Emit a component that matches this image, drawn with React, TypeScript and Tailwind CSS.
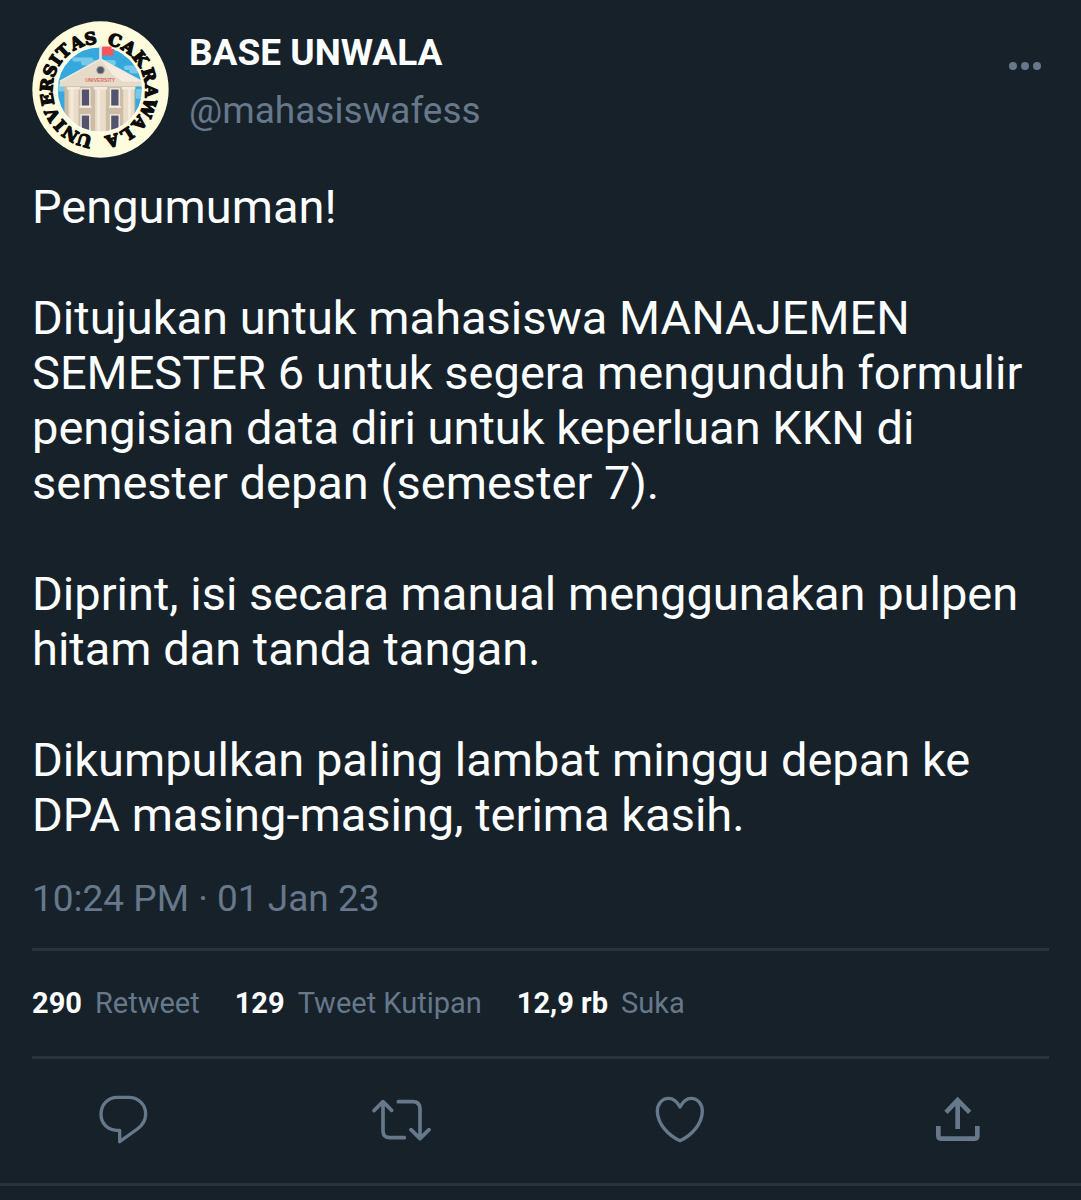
const ringLetters: [string, number][] = [
  ['U', 196],
  ['N', 213],
  ['I', 228],
  ['V', 242],
  ['E', 260],
  ['R', 276],
  ['S', 292],
  ['I', 305],
  ['T', 318],
  ['A', 335],
  ['S', 351],
  ['C', 18],
  ['A', 35],
  ['K', 53],
  ['R', 73],
  ['A', 91],
  ['W', 110],
  ['A', 129],
  ['L', 147],
  ['A', 165],
];

const paragraphs = [
  'Ditujukan untuk mahasiswa MANAJEMEN SEMESTER 6 untuk segera mengunduh formulir pengisian data diri untuk keperluan KKN di semester depan (semester 7).',
  'Diprint, isi secara manual menggunakan pulpen hitam dan tanda tangan.',
  'Dikumpulkan paling lambat minggu depan ke DPA masing-masing, terima kasih.',
];

const stats = [
  { value: '290', label: 'Retweet' },
  { value: '129', label: 'Tweet Kutipan' },
  { value: '12,9 rb', label: 'Suka' },
];

const Avatar = () => (
  <svg
    viewBox="35 33 410 410"
    className="size-[137px] shrink-0"
    role="img"
    aria-label="Universitas Cakrawala"
  >
    <defs>
      <clipPath id="badge">
        <circle cx="238" cy="238" r="128" />
      </clipPath>
    </defs>
    <circle cx="240" cy="238" r="204" fill="#fefcdc" />
    <g clipPath="url(#badge)">
      <rect x="105" y="105" width="270" height="270" fill="#35a9dd" />
      <g fill="#79c8e8">
        <rect x="156" y="142" width="62" height="12" rx="6" />
        <rect x="182" y="150" width="104" height="16" rx="8" />
        <rect x="310" y="166" width="60" height="14" rx="7" />
        <rect x="326" y="176" width="50" height="14" rx="7" />
        <rect x="108" y="220" width="30" height="24" rx="10" />
        <rect x="345" y="236" width="30" height="30" rx="8" />
      </g>
      <rect x="132" y="225" width="212" height="145" fill="#cdbda6" />
      <g fill="#e9ddc9">
        <rect x="144" y="236" width="30" height="134" />
        <rect x="224" y="236" width="32" height="134" />
        <rect x="308" y="236" width="32" height="134" />
      </g>
      <g fill="#f4eadb">
        <rect x="150" y="236" width="9" height="134" />
        <rect x="230" y="236" width="9" height="134" />
        <rect x="322" y="236" width="9" height="134" />
        <rect x="140" y="229" width="38" height="9" />
        <rect x="220" y="229" width="40" height="9" />
        <rect x="304" y="229" width="40" height="9" />
      </g>
      <g fill="#53536d" stroke="#f6efe4" strokeWidth="4">
        <rect x="182" y="236" width="26" height="52" />
        <rect x="270" y="236" width="26" height="52" />
        <rect x="182" y="314" width="26" height="47" />
        <rect x="270" y="314" width="26" height="47" />
      </g>
      <path d="M177 290h36M265 290h36" stroke="#f6efe4" strokeWidth="5" />
      <path d="M240 146 364 214v15H118v-15Z" fill="#e6dac8" />
      <path d="M240 146 364 214h-58l-30-20Z" fill="#f5ecdf" />
      <path d="M118 214 240 147l124 67" fill="none" stroke="#f1e8da" strokeWidth="5" />
      <path d="M132 229h212" stroke="#d5c6b1" strokeWidth="3" />
      <circle cx="240" cy="180" r="11" fill="#53536d" stroke="#9a948f" strokeWidth="3" />
      <text
        x="239"
        y="216"
        textAnchor="middle"
        fontSize="15"
        fontWeight="700"
        fill="#dc6a63"
        className="font-['Liberation_Sans']"
      >
        UNIVERSITY
      </text>
    </g>
    <circle cx="238" cy="238" r="128" fill="none" stroke="#fffff2" strokeWidth="4" />
    <rect x="236" y="106" width="8" height="44" fill="#e8e3e0" />
    <path d="M245 109h28v8h9l-6 10 6 9h-37Z" fill="#f9545c" />
    {ringLetters.map(([letter, angle]) => (
      <text
        key={angle}
        x="235"
        y="101"
        textAnchor="middle"
        fontSize="50"
        fontWeight="700"
        fill="#0c0b0a"
        stroke="#0c0b0a"
        strokeWidth="4"
        strokeLinejoin="round"
        transform={`rotate(${angle} 235 240)`}
        className="font-['DejaVu_Serif']"
      >
        {letter}
      </text>
    ))}
  </svg>
);

const iconClass = 'h-[54px] w-[60px] fill-none stroke-[#66788a]';

const ReplyIcon = () => (
  <svg viewBox="39 39 180 162" className={iconClass} strokeWidth="10" strokeLinejoin="round">
    <path d="M112 52h34c29 0 51 22 51 50 0 19-10 34-25 45l-53 38v-34h-9c-27 0-47-21-47-48 0-29 21-51 49-51Z" />
  </svg>
);

const RetweetIcon = () => (
  <svg
    viewBox="33 39 180 162"
    className={iconClass}
    strokeWidth="11"
    strokeLinecap="round"
    strokeLinejoin="round"
  >
    <path d="M42 92 69 65 95 91M69 67v85q0 21 21 21h43" />
    <path d="M115 65h43q22 0 22 22v88M153 149l27 27 27-27" />
  </svg>
);

const LikeIcon = () => (
  <svg viewBox="42 39 180 162" className={iconClass} strokeWidth="10" strokeLinejoin="round">
    <path d="M132 81C123 64 110 55 98 55c-20 0-34 17-34 38 0 40 36 75 68 89 32-14 67-49 67-89 0-21-14-38-34-38-12 0-24 9-33 26Z" />
  </svg>
);

const ShareIcon = () => (
  <svg viewBox="36 39 180 162" className={iconClass} strokeWidth="14">
    <path d="M90 97 125 60 161 97M125 62v85" />
    <path d="M67 138v29q0 9 9 9h99q9 0 9-9v-29" />
  </svg>
);

const actions = [
  { label: 'Balas', Icon: ReplyIcon },
  { label: 'Retweet', Icon: RetweetIcon },
  { label: 'Suka', Icon: LikeIcon },
  { label: 'Bagikan', Icon: ShareIcon },
];

export default function App() {
  return (
    <main className="min-h-screen bg-[#17212a] font-['Roboto',sans-serif] text-[#fcfeff]">
      <article className="border-b-3 border-[#28333d] pt-[21px]">
        <div className="px-8">
          <header className="flex items-start">
            <Avatar />
            <div className="ml-5 flex-1 pt-[10px]">
              <h1 className="text-[37px] leading-[44px] font-bold">BASE UNWALA</h1>
              <a href="#profile" className="mt-[14px] block text-[37px] leading-[44px] text-[#66788a]">
                @mahasiswafess
              </a>
            </div>
            <button type="button" aria-label="Lainnya" className="mt-9 mr-2">
              <svg viewBox="0 0 32 18" className="h-[18px] w-8 fill-[#66788a]">
                <circle cx="4" cy="9" r="4" />
                <circle cx="16" cy="9" r="4" />
                <circle cx="28" cy="9" r="4" />
              </svg>
            </button>
          </header>

          <div className="mt-[21px] space-y-14 text-[47px] leading-[55px]">
            <p>Pengumuman!</p>
            {paragraphs.map((text) => (
              <p key={text}>{text}</p>
            ))}
          </div>

          <p className="mt-[35px] text-[37px] leading-[44px] text-[#66788a]">
            <time dateTime="2023-01-01T22:24">10:24 PM · 01 Jan 23</time>
          </p>

          <div className="mt-[27px] flex gap-[35px] border-y-3 border-[#28333d] py-[35px] text-[29px] leading-[35px]">
            {stats.map(({ value, label }) => (
              <a key={label} href="#stats" className="flex gap-[13px] text-[#66788a]">
                <span className="font-bold text-[#fcfeff]">{value}</span>
                <span>{label}</span>
              </a>
            ))}
          </div>

          <div className="flex justify-between px-[61px] pt-[34px] pb-9">
            {actions.map(({ label, Icon }) => (
              <button key={label} type="button" aria-label={label}>
                <Icon />
              </button>
            ))}
          </div>
        </div>
      </article>
    </main>
  );
}
